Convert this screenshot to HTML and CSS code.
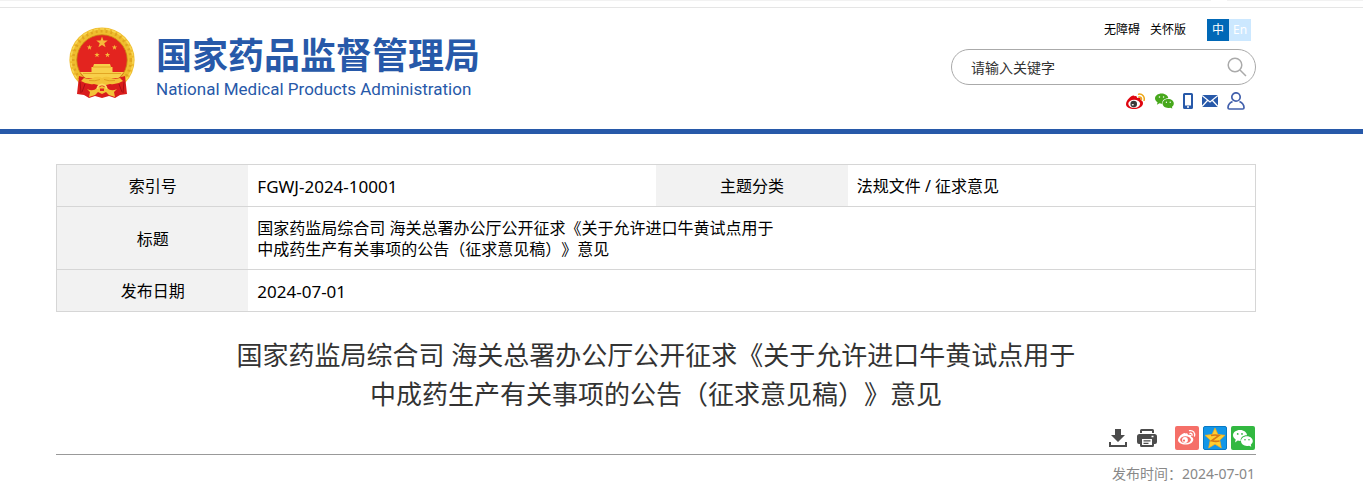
FILE: index.html
```html
<!DOCTYPE html>
<html lang="zh-CN">
<head>
<meta charset="utf-8">
<title>国家药品监督管理局</title>
<link rel="stylesheet" href="styles.css">
</head>
<body>
<div class="top-strip"><span></span><span></span></div>
<header class="header">
  <div class="container header-inner">
    <a class="brand" href="#">
      <svg class="emblem" viewBox="0 0 66 72" aria-hidden="true">
        <defs>
          <path id="star" d="M0-5 1.2-1.6 4.8-1.6 1.9.6 3 4 0 2-3 4-1.9.6-4.8-1.6-1.2-1.6z"/>
        </defs>
        <circle cx="33" cy="33" r="32.6" fill="#efbd2e"/>
        <circle cx="33" cy="33" r="29" fill="none" stroke="#e0a51f" stroke-width="3" stroke-dasharray="2 3"/>
        <circle cx="33" cy="33" r="31" fill="none" stroke="#f8d552" stroke-width="1.6" stroke-dasharray="4 2"/>
        <circle cx="33" cy="33" r="25.2" fill="#e3241f" stroke="#c98512" stroke-width=".8"/>
        <g fill="#f6b93a">
          <use href="#star" transform="translate(33 15.500) scale(1.200)"/>
          <use href="#star" transform="translate(20.500 20.500) scale(.56)"/>
          <use href="#star" transform="translate(45.500 20.500) scale(.56)"/>
          <use href="#star" transform="translate(28 28) scale(.56)"/>
          <use href="#star" transform="translate(38.500 28) scale(.56)"/>
        </g>
        <path fill="#f8d04a" d="M25 37h16l1 3h1.500v5H55l-5 6H16l-5-6h11.500v-5H24z"/>
        <path d="M24 40h18M14 46.500h38" stroke="#dc9a1b" stroke-width=".8"/>
        <path fill="#d91c1c" d="M10 49q12 3 16 6h14q4-3 16-6l2 18-7 1-5 3-6-2-7 2-7-2-6 2-5-3-7-1z"/>
        <path d="M11 55l1 11M16 57l-3 8M55 55l-1 11M50 57l3 8" stroke="#a90f14" stroke-width="1"/>
        <path fill="#f3c238" d="M15 51q6 2 11-1 4-1 7 1 3-2 7-1 5 3 11 1l3 3q-6 4-13 3l-4 1h-8l-4-1q-7 1-13-3z"/>
        <path d="M20 53.500q6 1 11-1M46 53.500q-6 1-11-1" fill="none" stroke="#d9951b" stroke-width=".8"/>
        <path fill="#f3c238" d="M18 62q6 3 10-1l5-2 5 2q4 4 10 1l-3 3 1 5-6-2-3-3-4 2-4-2-3 3-6 2 1-5z"/>
        <path d="M28.500 62a4.500 4.500 0 0 1 9 0" fill="none" stroke="#fbdc60" stroke-width="2"/>
        <path fill="#e3241f" d="M31 61.500h4v2.500h-4z"/>
      </svg>
      <span class="brand-text">
        <span class="brand-cn">国家药品监督管理局</span>
        <span class="brand-en">National Medical Products Administration</span>
      </span>
    </a>
    <div class="tools">
      <nav class="tool-links">
        <a href="#">无障碍</a>
        <a href="#">关怀版</a>
        <span class="lang"><a class="lang-cn" href="#">中</a><a class="lang-en" href="#">En</a></span>
      </nav>
      <form class="search">
        <input type="text" placeholder="请输入关键字" aria-label="请输入关键字">
        <button type="button" aria-label="搜索">
          <svg width="20" height="20" viewBox="0 0 20 20" fill="none" stroke="#aaa" stroke-width="1.500"><circle cx="8" cy="8" r="6.800"/><path d="M13 13l6 6"/></svg>
        </button>
      </form>
      <nav class="social">
        <a href="#" aria-label="微博"><svg width="20" height="17" viewBox="0 0 20 17"><path fill="#df0610" d="M8.500 3.200c1.600-.6 2.700.1 2.500 1.900 2.500-1 4.500-.3 3.600 1.900 1.700.6 2.400 1.600 2.400 3.200 0 3.200-3.900 5.800-8.600 5.800S0 14 0 11.200C0 7.600 5 2.600 7.500 2.600c.7 0 1 .3 1 .6z"/><ellipse cx="8.200" cy="10.800" rx="5.900" ry="4" fill="#fff"/><circle cx="7.700" cy="11" r="3.300" fill="#3a3a3a"/><ellipse cx="6.800" cy="11.800" rx="1.100" ry=".8" fill="#fff"/><path d="M12.600 1.200c3.800-.6 6.400 2.500 5.500 6.100M13 4c1.700-.3 2.800.9 2.400 2.500" fill="none" stroke="#eda716" stroke-width="1.500" stroke-linecap="round"/></svg></a>
        <a href="#" aria-label="微信"><svg width="19" height="16" viewBox="0 0 20 16"><path fill="#47a81c" d="M7 0c4 0 7 2.500 7 5.200-4 0-6.800 2.500-6.300 5.600-1 .1-2-.1-3-.4L2 12l.7-2.600C1 8.300 0 6.900 0 5.300 0 2.300 3 0 7 0z"/><path fill="#47a81c" d="M13.900 5.900c3.400 0 5.900 2.100 5.900 4.700 0 1.500-.8 2.700-2 3.500l.5 1.900-2.300-1c-4.300 1-8-1.100-8-4.400 0-2.600 2.500-4.700 5.900-4.700z"/><g fill="#fff"><circle cx="4.700" cy="3.800" r=".8"/><circle cx="9" cy="3.800" r=".8"/><circle cx="12" cy="9.300" r=".7"/><circle cx="16" cy="9.300" r=".7"/></g></svg></a>
        <a href="#" aria-label="移动客户端"><svg width="10" height="16" viewBox="0 0 10 16"><path fill="#2759a9" fill-rule="evenodd" d="M1.500 0h7Q10 0 10 1.500v13Q10 16 8.500 16h-7Q0 16 0 14.500v-13Q0 0 1.500 0zM2 2v10.500h6V2zM4 13.300v1.400h2v-1.400z"/></svg></a>
        <a href="#" aria-label="邮箱"><svg width="16" height="12" viewBox="0 0 16 12"><path fill="#2759a9" d="M0 0h16v12H0z"/><path d="M0 .5l8 6.500 8-6.500M0 11.500l5.500-6M16 11.500l-5.500-6" fill="none" stroke="#fff" stroke-width="1.200"/></svg></a>
        <a href="#" aria-label="个人中心"><svg width="18" height="18" viewBox="0 0 18 18" fill="none" stroke="#4260ac" stroke-width="1.700"><circle cx="9" cy="5" r="4.200"/><path d="M5.500 9.500C2.500 11 1 13 1 15.700q0 1.300 1.300 1.300h13.400q1.300 0 1.300-1.300c0-2.700-1.500-4.700-4.500-6.200"/></svg></a>
      </nav>
    </div>
  </div>
</header>
<main class="container main">
  <table class="info">
    <tr><th scope="row">索引号</th><td class="latin">FGWJ-2024-10001</td><th scope="row">主题分类</th><td>法规文件 / 征求意见</td></tr>
    <tr><th scope="row">标题</th><td colspan="3">国家药监局综合司 海关总署办公厅公开征求《关于允许进口牛黄试点用于<br>中成药生产有关事项的公告（征求意见稿）》意见</td></tr>
    <tr><th scope="row">发布日期</th><td class="latin" colspan="3">2024-07-01</td></tr>
  </table>
  <h1 class="title">国家药监局综合司 海关总署办公厅公开征求《关于允许进口牛黄试点用于<br>中成药生产有关事项的公告（征求意见稿）》意见</h1>
  <div class="actions">
    <div class="action-group">
      <button type="button" aria-label="下载"><svg width="18" height="18" viewBox="0 0 18 18" fill="#4c4c4c"><path d="M6 0h6v6h4l-7 7-7-7h4z"/><path d="M0 13h2v3h14v-3h2v5H0z"/></svg></button>
      <button type="button" aria-label="打印"><svg width="20" height="18" viewBox="0 0 20 18"><path fill="#4c4c4c" fill-rule="evenodd" d="M4.500 0h11Q17 0 17 1.500V4h-2V2H5v2H3V1.500Q3 0 4.500 0zM2.500 5h15Q20 5 20 7.500V13q0 2-2 2h-1v1.500q0 1.500-1.500 1.500h-11Q3 18 3 16.500V15H2q-2 0-2-2V7.500Q0 5 2.500 5zM14.500 6.800v1.400h2V6.800zM5 10v6h10v-6zM6.500 11.300h7v1.200h-7zM6.500 13.700h5v1.200h-5z"/></svg></button>
    </div>
    <div class="share">
      <a class="share-weibo" href="#" aria-label="分享到微博"><svg width="18" height="18" viewBox="0 0 18 18"><path fill="#fff" d="M7.500 4.500c1.600-.7 2.600 0 2.400 1.600 2.300-.8 3.900-.1 3.200 1.700 1.500.5 2.200 1.300 2.200 2.600 0 2.900-3.500 5.100-7.700 5.100S0 13.600 0 11C0 7.800 4.500 3.900 6.600 3.900q.7 0 .9.600z"/><ellipse cx="7.500" cy="10.800" rx="5.400" ry="3.500" fill="#f56f68"/><circle cx="7" cy="11" r="2.900" fill="#fff"/><circle cx="6" cy="11.600" r="1.100" fill="#f56f68"/><path d="M11.500 1.700c3.500-.7 5.900 2.100 5 5.500M12 4.300c1.500-.2 2.400.8 2 2.200" fill="none" stroke="#fff" stroke-width="1.300" stroke-linecap="round"/></svg></a>
      <a class="share-qzone" href="#" aria-label="分享到QQ空间"><svg width="22" height="22" viewBox="0 0 22 22"><path fill="#ffce2f" stroke="#f3a91c" stroke-width=".7" d="M11 1l3 6.500 7 .8-5.200 4.800L17.300 21 11 17.200 4.700 21l1.500-7.900L1 8.300l7-.8z"/><path fill="none" stroke="#d77915" stroke-width="1.700" d="M7 8.500q4-1 8 0l-7.500 5.300q4 1 8 .2"/></svg></a>
      <a class="share-wechat" href="#" aria-label="分享到微信"><svg width="20" height="17" viewBox="0 0 20 17"><path fill="#fff" d="M7 0c4 0 7 2.500 7 5.300-4 0-6.800 2.400-6.300 5.700-1 .1-2-.1-3-.4L2 12.500l.7-3C1 8.400 0 6.900 0 5.300 0 2.300 3 0 7 0z"/><path fill="#fff" d="M13.900 6.200c3.400 0 5.900 2.200 5.900 4.900 0 1.500-.8 2.700-2 3.600l.5 2-2.300-1c-4.300 1-8-1.200-8-4.600 0-2.700 2.500-4.900 5.900-4.900z"/><g fill="#32b841"><circle cx="4.700" cy="3.900" r=".9"/><circle cx="9" cy="3.900" r=".9"/><circle cx="12" cy="9.700" r=".8"/><circle cx="16" cy="9.700" r=".8"/></g></svg></a>
    </div>
  </div>
  <p class="date">发布时间：2024-07-01</p>
</main>
</body>
</html>
```
FILE: styles.css
```css
* { box-sizing: border-box; }
body {
  margin: 0;
  background: #fff;
  color: #000;
  font-family: "Noto Sans", "Noto Sans CJK SC", sans-serif;
  font-size: 16px;
  text-spacing-trim: space-all;
}
a { color: inherit; text-decoration: none; }
svg { display: block; }
button { padding: 0; border: 0; background: none; cursor: pointer; }

.top-strip {
  display: flex;
  gap: 16px;
  height: 8px;
  border-bottom: 1px solid #e5e5e5;
}
.top-strip span { height: 1px; background: #f2f2f2; flex: 1; }
.top-strip span:last-child { flex: 0 0 10%; }

.container { width: calc(100% - 96px); max-width: 1200px; margin-left: 56px; }

.header { border-bottom: 5px solid #2759a9; }
.header-inner {
  display: flex;
  justify-content: space-between;
  height: 121px;
}
.brand {
  display: flex;
  align-items: flex-start;
  gap: 21px;
  padding: 19px 0 0 13px;
  color: #2759a9;
}
.emblem { width: 66px; height: 72px; }
.brand-text { display: flex; flex-direction: column; }
.brand-cn {
  font-family: "Noto Sans CJK SC", sans-serif;
  font-size: 36px;
  font-weight: 700;
  line-height: 52px;
}
.brand-en {
  font-family: Roboto, sans-serif;
  font-size: 17px;
  line-height: 20px;
}

.tools { width: 305px; padding-top: 11px; }
.tool-links {
  display: flex;
  justify-content: flex-end;
  align-items: center;
  gap: 10px;
  padding-right: 5px;
  font-size: 12px;
  line-height: 22px;
}
.lang { display: flex; margin-left: 11px; color: #fff; text-align: center; }
.lang a { width: 22px; }
.lang-cn { background: #0068b7; }
.lang-en { background: #cce8ff; }

.search {
  display: flex;
  align-items: center;
  height: 36px;
  margin-top: 8px;
  padding: 0 8px 0 19px;
  border: 1px solid #aaa;
  border-radius: 18px;
}
.search input {
  flex: 1;
  min-width: 0;
  padding: 0;
  border: 0;
  outline: 0;
  background: none;
  font: inherit;
  font-size: 14px;
}
.search input::placeholder { color: #333; opacity: 1; }

.social {
  display: flex;
  justify-content: flex-end;
  align-items: center;
  gap: 9px;
  margin-top: 7px;
  padding-right: 11px;
}

.main { padding-top: 30px; }
.info {
  width: 100%;
  table-layout: fixed;
  border-collapse: collapse;
  border: 1px solid #d6d6d6;
  line-height: 21px;
}
.info tr { border-bottom: 1px solid #d6d6d6; }
.info th { width: 16%; background: #f2f2f2; font-weight: 400; }
.info th, .info td { padding: 11px 9px 9px; }
.info td { text-align: left; }
.info .latin { font-size: 17px; }

.title {
  margin: 24px 0 0;
  color: #333;
  font-size: 26px;
  font-weight: 400;
  line-height: 39px;
  text-align: center;
}
.actions {
  display: flex;
  justify-content: flex-end;
  align-items: center;
  gap: 18px;
  margin-top: 12px;
  padding-bottom: 4px;
  border-bottom: 1px solid #999;
}
.action-group { display: flex; gap: 10px; }
.share { display: flex; gap: 4px; padding-right: 1px; }
.share a {
  display: grid;
  place-items: center;
  width: 24px;
  height: 24px;
  border-radius: 2px;
}
.share-weibo { background: #f56f68; }
.share-qzone { background: #1296e8; border: 1px solid #0879c4; }
.share-wechat { background: #32b841; }
.date {
  margin: 8px 1px 0 0;
  color: #888;
  font-size: 14px;
  line-height: 21px;
  text-align: right;
}
```
